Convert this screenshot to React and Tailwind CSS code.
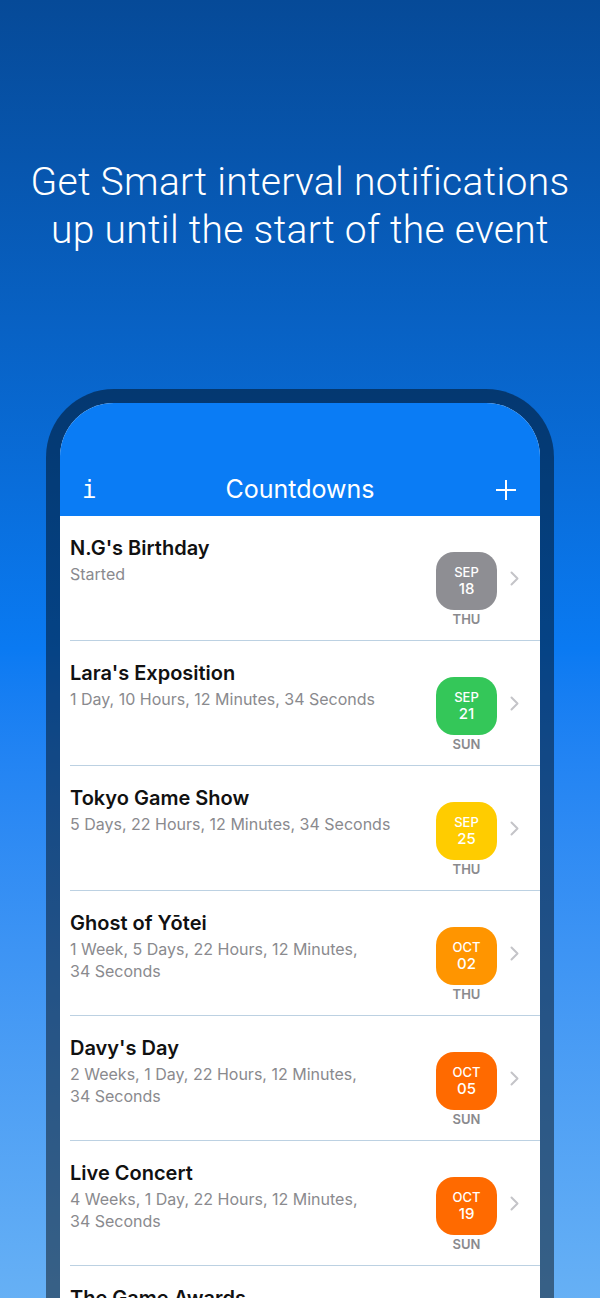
import React from 'react';

const events = [
  { title: "N.G's Birthday", lines: ['Started'], month: 'SEP', day: '18', dow: 'THU', color: 'bg-[#8e8e93]' },
  { title: "Lara's Exposition", lines: ['1 Day, 10 Hours, 12 Minutes, 34 Seconds'], month: 'SEP', day: '21', dow: 'SUN', color: 'bg-[#34c759]' },
  { title: 'Tokyo Game Show', lines: ['5 Days, 22 Hours, 12 Minutes, 34 Seconds'], month: 'SEP', day: '25', dow: 'THU', color: 'bg-[#ffcc00]' },
  { title: 'Ghost of Yōtei', lines: ['1 Week, 5 Days, 22 Hours, 12 Minutes,', '34 Seconds'], month: 'OCT', day: '02', dow: 'THU', color: 'bg-[#ff9500]' },
  { title: "Davy's Day", lines: ['2 Weeks, 1 Day, 22 Hours, 12 Minutes,', '34 Seconds'], month: 'OCT', day: '05', dow: 'SUN', color: 'bg-[#ff6a00]' },
  { title: 'Live Concert', lines: ['4 Weeks, 1 Day, 22 Hours, 12 Minutes,', '34 Seconds'], month: 'OCT', day: '19', dow: 'SUN', color: 'bg-[#ff6a00]' },
  { title: 'The Game Awards', lines: ['9 Weeks, 22 Hours, 12 Minutes,', '34 Seconds'], month: 'DEC', day: '11', dow: 'THU', color: 'bg-[#ff3b30]' },
];

function Row({ ev }) {
  return (
    <div className="h-[125px] shrink-0 flex flex-col">
      <div className="flex-1 flex">
        <div className="flex-1 pl-[10px] pt-[20px]">
          <div className="text-[20px] leading-[24px] font-semibold text-[#111]">{ev.title}</div>
          <div className="mt-[3px] text-[16px] leading-[22px] text-[#8a8a8e]">
            {ev.lines.map((l, i) => <div key={i}>{l}</div>)}
          </div>
        </div>
        <div className="flex items-start pt-[36px] pr-[21px]">
          <div className="flex flex-col items-center w-[61px]">
            <div className={`${ev.color} w-[61px] h-[58px] rounded-[18px] flex flex-col items-center justify-center text-white font-medium`}>
              <span className="text-[13px] leading-[16px]">{ev.month}</span>
              <span className="text-[15px] leading-[18px]">{ev.day}</span>
            </div>
            <span className="mt-[1px] text-[13px] leading-[16px] font-semibold text-[#8a8a8e]">{ev.dow}</span>
          </div>
          <svg className="ml-[13px] mt-[19px]" width="9" height="15" viewBox="0 0 9 15">
            <path d="M1.5 1.5 L7.5 7.5 L1.5 13.5" fill="none" stroke="#c4c4c8" strokeWidth="2" strokeLinecap="round" strokeLinejoin="round" />
          </svg>
        </div>
      </div>
      <div className="ml-[10px] h-px bg-[#bcd1e2]" />
    </div>
  );
}

export default function App() {
  return (
    <div className="h-[1298px] overflow-hidden flex flex-col items-center bg-gradient-to-b from-[#064a98] via-[#0a7af2] via-50% to-[#66b0f5] font-['Inter',sans-serif]">
      <h1 className="mt-[158px] text-center text-white font-['Roboto',sans-serif] font-light text-[39px] leading-[48px] tracking-[0.3px]">
        Get Smart interval notifications<br />up until the start of the event
      </h1>
      <div className="mt-[135px] w-[508px] shrink-0 bg-black/45 rounded-t-[68px] p-[14px] pb-0">
        <div className="rounded-t-[54px] overflow-hidden bg-white h-[900px] flex flex-col">
          <div className="h-[113px] shrink-0 bg-[#0a7cf5] flex flex-col justify-end">
            <div className="h-[52px] grid grid-cols-[1fr_auto_1fr] items-center px-[22px] text-white">
              <span className="font-['DejaVu_Sans_Mono',monospace] text-[24px] leading-none">i</span>
              <span className="text-[25px]">Countdowns</span>
              <svg className="justify-self-end" width="24" height="24" viewBox="0 0 24 24">
                <path d="M12 2 V22 M2 12 H22" stroke="#fff" strokeWidth="2" />
              </svg>
            </div>
          </div>
          {events.map((ev, i) => <Row key={i} ev={ev} />)}
        </div>
      </div>
    </div>
  );
}
